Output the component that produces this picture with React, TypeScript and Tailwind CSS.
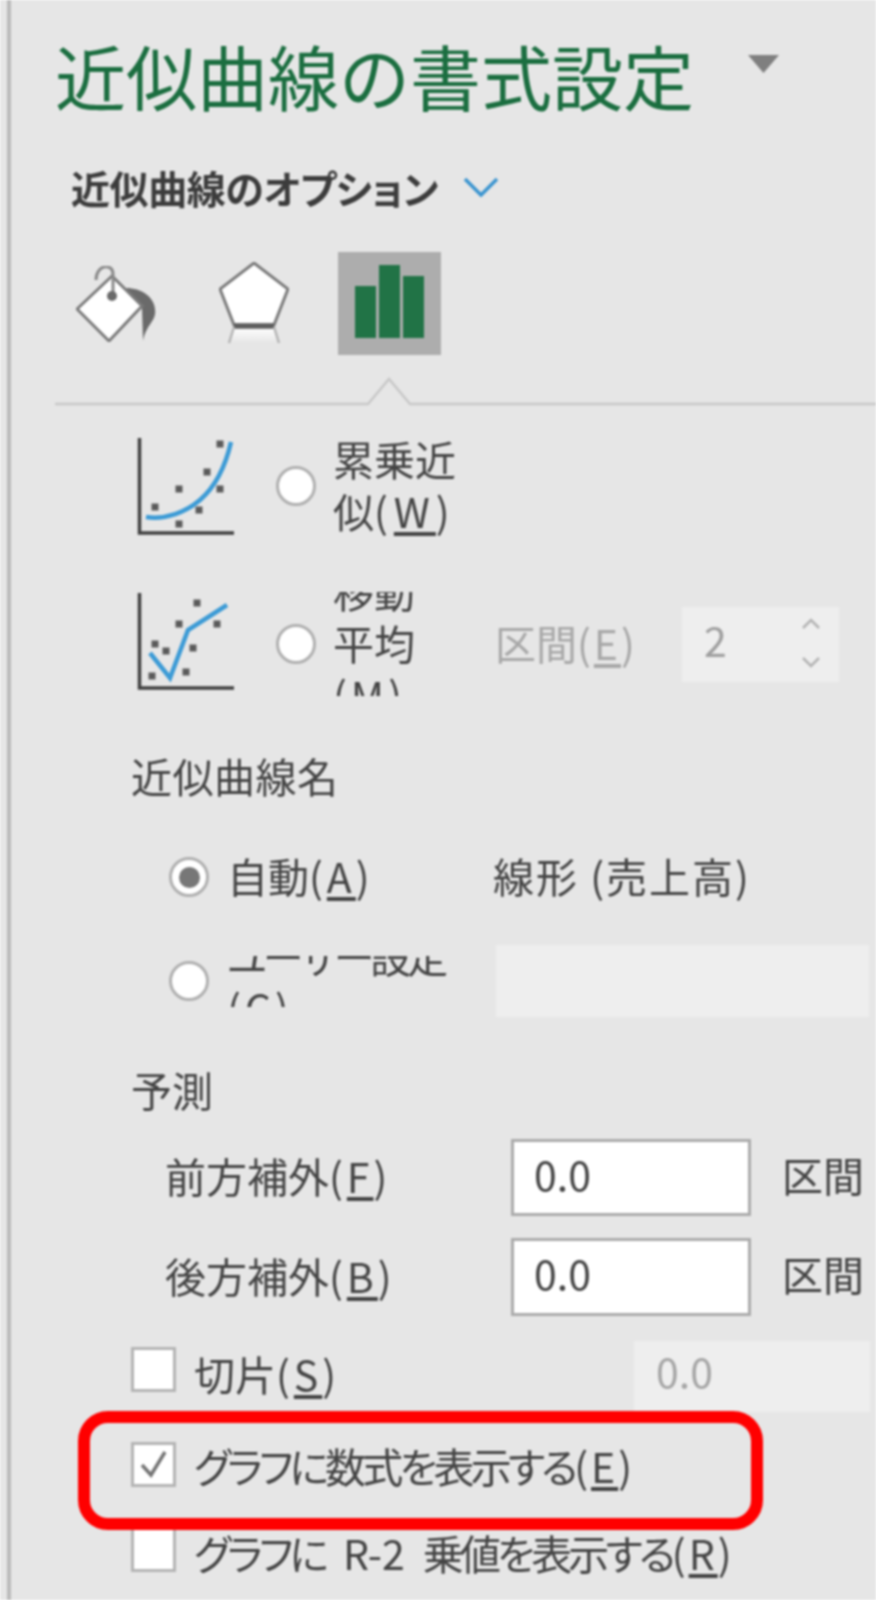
import React from 'react';

const Radio = ({ checked = false }: { checked?: boolean }) => (
  <span className="flex h-10 w-10 shrink-0 items-center justify-center rounded-full border-[3px] border-[#b0b0b0] bg-white">
    {checked && <span className="h-[21px] w-[21px] rounded-full bg-[#777777]" />}
  </span>
);

const Checkbox = ({ checked = false }: { checked?: boolean }) => (
  <span className="flex h-[45px] w-[45px] shrink-0 items-center justify-center border-[3px] border-[#b4b4b4] bg-white">
    {checked && (
      <svg width="30" height="30" viewBox="0 0 30 30" fill="none">
        <path d="M3 16 L12 26 L26 3" stroke="#747474" strokeWidth="3.5" />
      </svg>
    )}
  </span>
);

// access key, e.g. (W)
const Key = ({ k, className = 'tracking-[4px]' }: { k: string; className?: string }) => (
  <span className={className}>
    (<span className="underline underline-offset-4">{k}</span>)
  </span>
);

const TextInput = ({ value }: { value: string }) => (
  <div className="flex h-full w-[240px] items-center border-[3px] border-[#ababab] bg-white pb-[10px] pl-[20px] text-[41px] text-[#444444]">
    {value}
  </div>
);

const Axes = ({ d }: { d: string }) => <path d={d} fill="none" stroke="#404040" strokeWidth="3.5" />;

const Dots = ({ points }: { points: number[][] }) => (
  <>
    {points.map(([x, y]) => (
      <rect key={`${x}-${y}`} x={x - 3.5} y={y - 3.5} width="7" height="7" fill="#5a5a5a" />
    ))}
  </>
);

const PowerIcon = () => (
  <svg width="100" height="104" viewBox="0 0 100 104" fill="none" className="shrink-0">
    <Axes d="M3.5 4V99H98" />
    <Dots points={[[84, 10], [71, 38], [84, 55], [43, 55], [63, 76], [19, 73], [43, 90]]} />
    <path d="M10 83C30 86 50 78 64 66C80 52 90 30 95 8" stroke="#3c9bd6" strokeWidth="4.5" />
  </svg>
);

const MovingAverageIcon = () => (
  <svg width="100" height="104" viewBox="0 0 100 104" fill="none" className="shrink-0">
    <Axes d="M3.5 1V96H98" />
    <Dots points={[[61, 11], [43, 32], [81, 32], [19, 52], [30, 59], [57, 56], [50, 80], [16, 84]]} />
    <path d="M14 61L34 86L52 38L91 13" stroke="#3c9bd6" strokeWidth="4.5" />
  </svg>
);

const FillIcon = () => (
  <svg width="80" height="76" viewBox="0 0 80 76" fill="none" className="shrink-0">
    <path d="M50 22C66 22 81 32 79 48C78 56 70 60 67 75L66 42Z" fill="#6a6a6a" />
    <path d="M1 43L36 10L66 40L33 75Z" fill="#ffffff" stroke="#7b7b7b" strokeWidth="3" />
    <path d="M20 14C20 -2 37 -3 37 8V30" stroke="#8a8a8a" strokeWidth="3" />
    <circle cx="36" cy="30" r="5" fill="#6a6a6a" />
  </svg>
);

const ShapeIcon = () => (
  <svg width="70" height="84" viewBox="0 0 70 84" fill="none" className="ml-[63px] shrink-0">
    <defs>
      <linearGradient id="shapeFade" x1="0" y1="0" x2="0" y2="1">
        <stop offset="0" stopColor="#ffffff" />
        <stop offset="1" stopColor="#e6e6e6" />
      </linearGradient>
    </defs>
    <path d="M15 65L10 81H60L55 65Z" fill="url(#shapeFade)" />
    <path d="M35 1L69 27L55 63H15L1 27Z" fill="#ffffff" stroke="#7b7b7b" strokeWidth="3" />
    <path d="M15 64H55" stroke="#5e5e5e" strokeWidth="5.5" />
    <path d="M15 65L10 81M55 65L60 81" stroke="#b4b4b4" strokeWidth="2.5" />
  </svg>
);

const BarsIcon = () => (
  <div className="ml-[49px] flex h-[103px] w-[103px] shrink-0 items-end gap-[3px] bg-[#adadad] pb-[17px] pl-[17px]">
    <div className="h-[52px] w-[21px] bg-[#217346]" />
    <div className="h-[73px] w-[21px] bg-[#217346]" />
    <div className="h-[62px] w-[21px] bg-[#217346]" />
  </div>
);

const App = () => {
  return (
    <div className="relative h-[1600px] w-[876px] overflow-hidden bg-[#e6e6e6] font-['Noto_Sans_CJK_JP',sans-serif] text-[41px] leading-[52px] text-[#444444] [font-feature-settings:'palt'] blur-[1px]">
      <div className="ml-[7px] flex h-full flex-col border-l-4 border-[#bababa]">
        <div className="mt-[32px] flex h-[84px] items-center pl-[44px]">
          <h1 className="text-[71px] leading-[84px] font-normal whitespace-nowrap text-[#1b6e40] [font-feature-settings:normal]">
            近似曲線の書式設定
          </h1>
          <svg width="31" height="18" viewBox="0 0 31 18" className="mb-[20px] ml-[54px] shrink-0">
            <path d="M0 0H31L15.5 18Z" fill="#7f7f7f" />
          </svg>
        </div>

        <div className="mt-[49px] flex h-[44px] items-center pl-[60px]">
          <span className="text-[39px] font-bold tracking-[-0.4px] whitespace-nowrap text-[#3c3c3c]">近似曲線のオプション</span>
          <svg width="36" height="20" viewBox="0 0 36 20" fill="none" className="ml-[25px] shrink-0">
            <path d="M2 2L18 18L34 2" stroke="#3a94d0" strokeWidth="3.5" />
          </svg>
        </div>

        <div className="mt-[43px] flex h-[103px] items-center pl-[65px]">
          <FillIcon />
          <ShapeIcon />
          <BarsIcon />
        </div>

        <svg width="821" height="30" viewBox="0 0 821 30" fill="none" className="mt-[22px] ml-[44px] shrink-0">
          <path d="M0 27H313L334 2L355 27H821" stroke="#c8c8c8" strokeWidth="2.5" />
        </svg>

        <div className="mt-[27px] flex h-[104px] items-center pl-[125px]">
          <PowerIcon />
          <span className="ml-[40px]"><Radio /></span>
          <div className="ml-[17px] pb-[5px]">
            累乗近
            <br />
            似<Key k="W" className="tracking-[6px]" />
          </div>
        </div>

        <div className="mt-[54px] flex h-[104px] items-center pl-[125px]">
          <MovingAverageIcon />
          <span className="ml-[40px]"><Radio /></span>
          <div className="ml-[17px] flex h-[104px] w-[162px] shrink-0 items-center overflow-hidden">
            <div className="shrink-0 pb-[4px]">
              移動
              <br />
              平均
              <br />
              <Key k="M" />
            </div>
          </div>
          <span className="w-[187px] shrink-0 pb-[5px] text-[#a8a8a8]">
            区間<Key k="E" className="tracking-[3px]" />
          </span>
          <div className="flex h-[75px] w-[157px] shrink-0 items-center justify-between bg-[#eeeeee] pr-[18px] pb-[2px] pl-[22px] text-[#a0a0a0]">
            <span className="pb-[8px]">2</span>
            <svg width="20" height="50" viewBox="0 0 20 50" fill="none">
              <path d="M2 10L10 2L18 10M2 40L10 48L18 40" stroke="#b4b4b4" strokeWidth="2.5" />
            </svg>
          </div>
        </div>

        <div className="mt-[57px] flex h-[44px] items-center pl-[120px] tracking-[0.5px]">近似曲線名</div>

        <div className="mt-[54px] flex h-[52px] items-center pl-[158px]">
          <Radio checked />
          <span className="ml-[18px] w-[266px] shrink-0 pb-[5px]">
            自動<Key k="A" />
          </span>
          <span className="pb-[5px] tracking-[2px]">線形 (売上高)</span>
        </div>

        <div className="mt-[42px] flex h-[72px] items-center pl-[158px]">
          <Radio />
          <div className="ml-[18px] flex h-[51px] w-[269px] shrink-0 items-center overflow-hidden">
            <div className="shrink-0 whitespace-nowrap">
              <span className="tracking-[-4px]">ユーザー設定</span>
              <br />
              <Key k="C" />
            </div>
          </div>
          <div className="h-full w-[373px] shrink-0 bg-[#eeeeee]" />
        </div>

        <div className="mt-[50px] flex h-[44px] items-center pl-[120px]">予測</div>

        <div className="mt-[28px] flex h-[77px] items-center pl-[154px]">
          <span className="w-[346px] shrink-0 pb-[5px]">
            前方補外<Key k="F" />
          </span>
          <TextInput value="0.0" />
          <span className="ml-[31px] shrink-0 pb-[8px]">区間</span>
        </div>

        <div className="mt-[22px] flex h-[78px] items-center pl-[154px]">
          <span className="w-[346px] shrink-0 pb-[5px]">
            後方補外<Key k="B" />
          </span>
          <TextInput value="0.0" />
          <span className="ml-[31px] shrink-0 pb-[8px]">区間</span>
        </div>

        <div className="mt-[25px] flex h-[71px] items-center pl-[120px]">
          <span className="pb-[14px]"><Checkbox /></span>
          <span className="ml-[18px] w-[440px] shrink-0 pb-[8px]">
            切片<Key k="S" />
          </span>
          <div className="flex h-full w-[236px] shrink-0 items-center bg-[#eeeeee] pb-[14px] pl-[22px] text-[#a6a6a6]">0.0</div>
        </div>

        <div className="mt-[29px] flex h-[46px] items-center pl-[120px]">
          <Checkbox checked />
          <span className="ml-[18px] pt-[2px] whitespace-nowrap">
            <span className="tracking-[-3.8px]">グラフに数式を表示する</span>
            <Key k="E" className="tracking-[3px]" />
          </span>
        </div>

        <div className="mt-[39px] flex h-[46px] items-center pl-[120px]">
          <Checkbox />
          <span className="ml-[18px] pt-[6px] whitespace-nowrap">
            <span className="tracking-[-3.8px]">グラフに</span>
            <span className="mx-[18px]">R-2</span>
            <span className="tracking-[-3.8px]">乗値を表示する</span>
            <Key k="R" className="tracking-[3px]" />
          </span>
        </div>
      </div>

      {/* red annotation round the equation checkbox */}
      <div className="absolute top-[1411px] left-[78px] h-[119px] w-[685px] rounded-[30px] border-[12px] border-[#ff0000]" />
    </div>
  );
};

export default App;
